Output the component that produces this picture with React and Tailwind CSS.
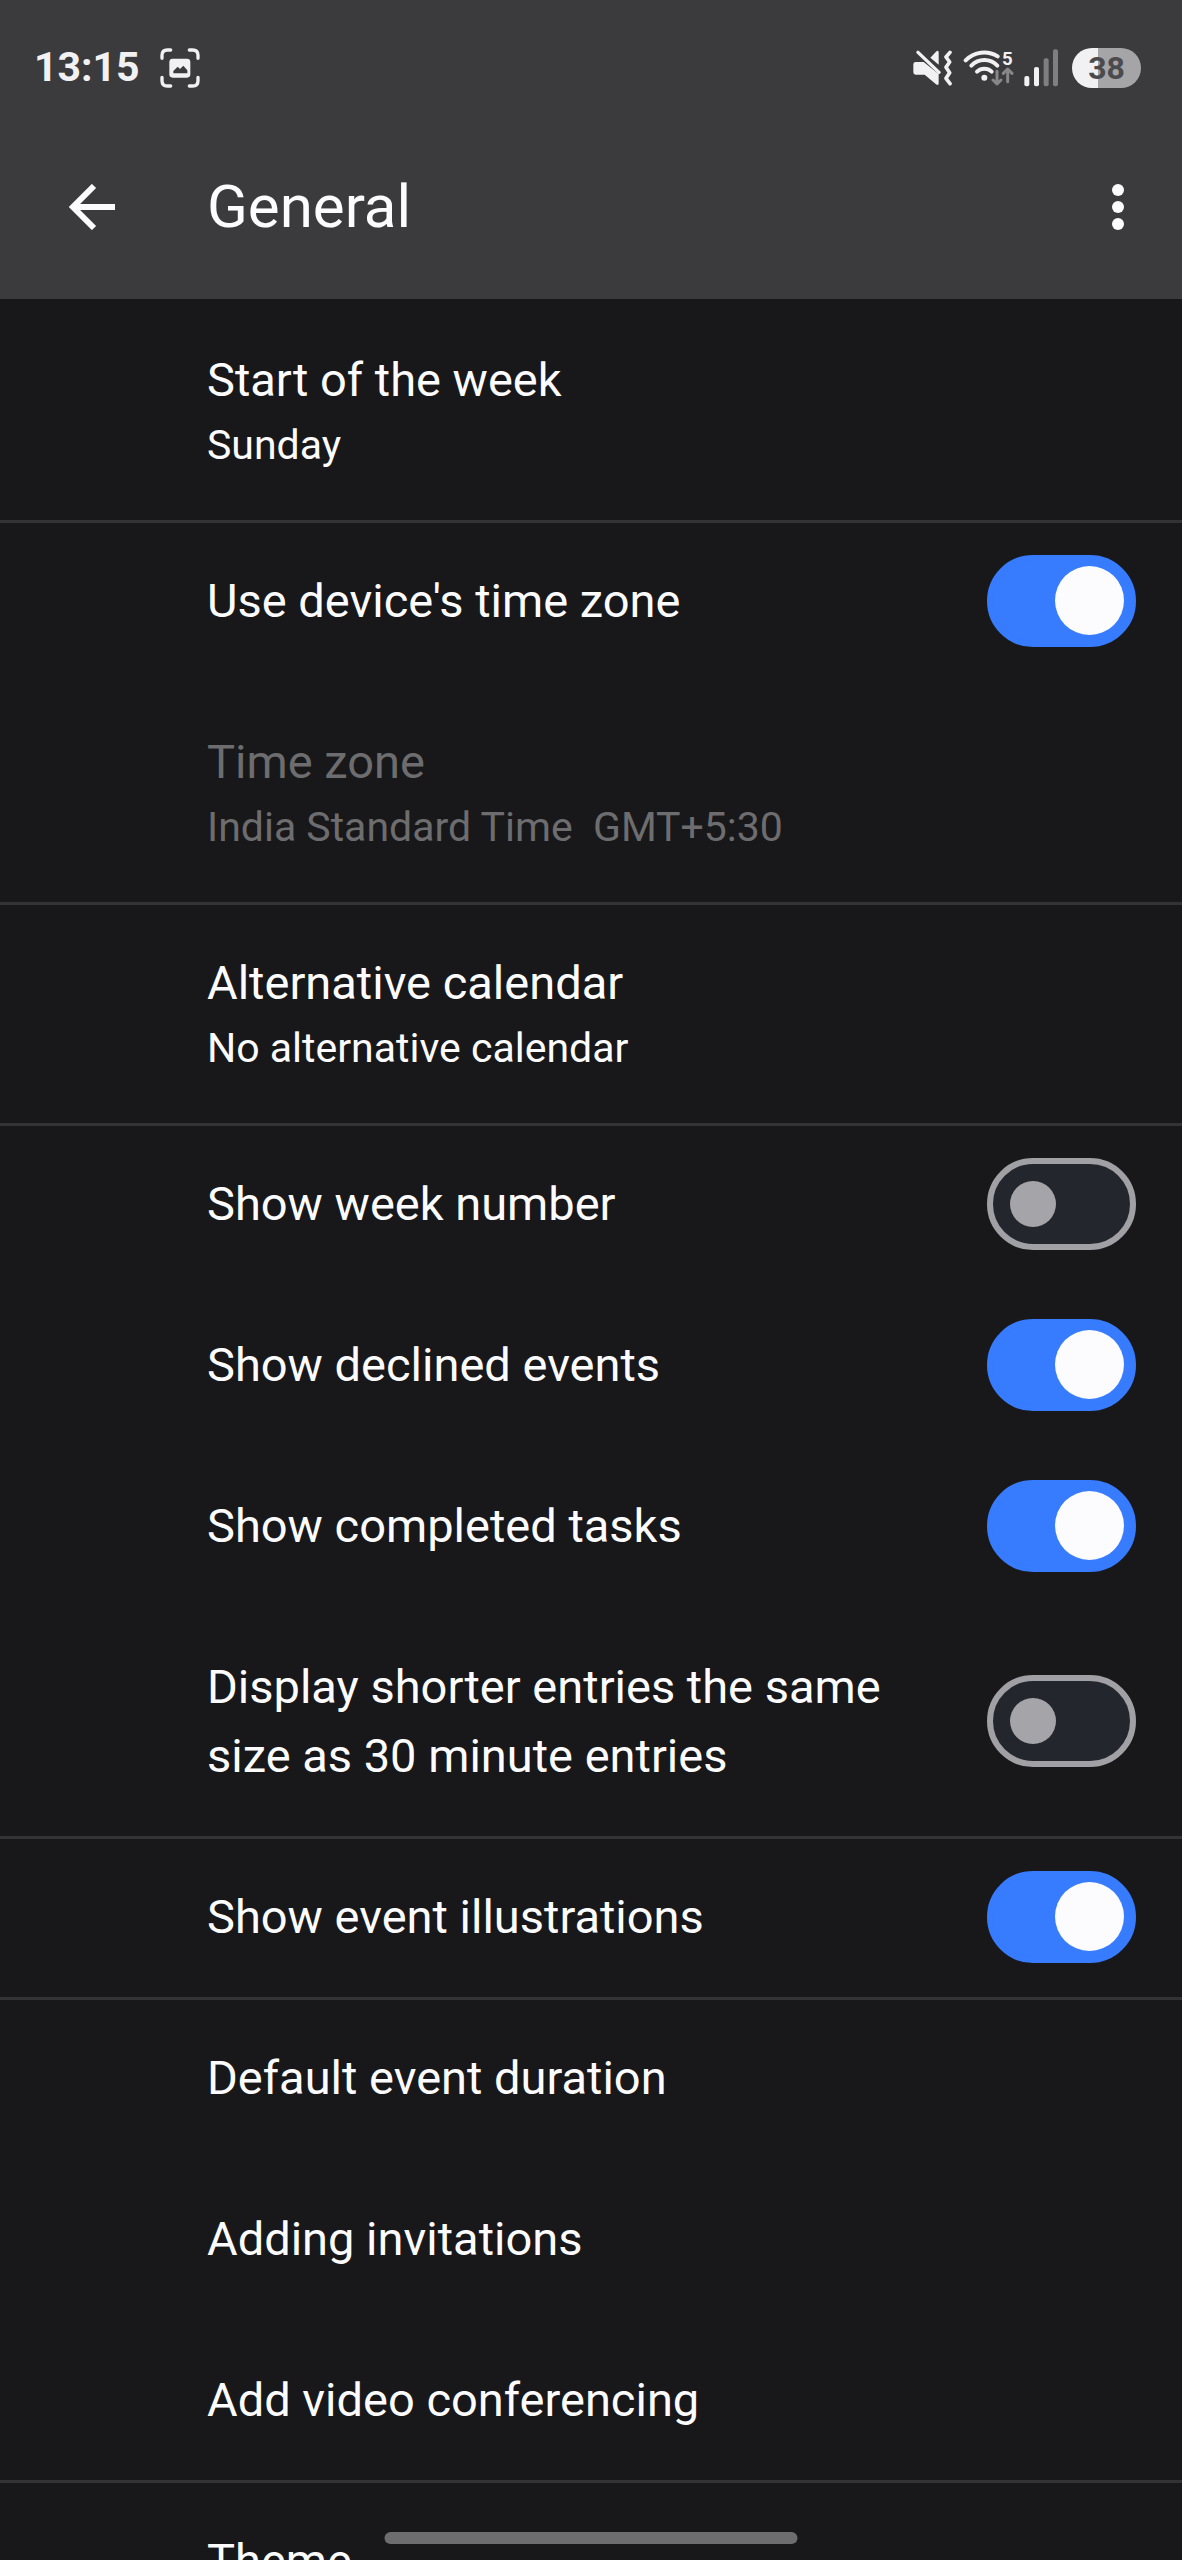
import { useState } from "react";

function ScreenshotIcon() {
  return (
    <svg viewBox="0 0 120 120" className="size-10" fill="none" aria-hidden="true">
      <g stroke="#f1f1f3" strokeWidth="10" strokeLinecap="round">
        <path d="M6 31V22Q6 6 22 6H32" />
        <path d="M88 6H98Q114 6 114 22V31" />
        <path d="M114 88V98Q114 114 98 114H88" />
        <path d="M32 114H22Q6 114 6 98V88" />
      </g>
      <rect x="28" y="32" width="63" height="57" rx="10" fill="#f1f1f3" />
      <path d="M40 76V69L53 56L60 63L70 53L82 67V76Z" fill="#3b3b3d" />
    </svg>
  );
}

function VibrateIcon() {
  return (
    <svg viewBox="0 0 120 108" className="h-9 w-10" fill="none" aria-hidden="true">
      <path
        d="M8 36H32L77 72V99Q77 109 69 103L35 74H8Q1 74 1 67V43Q1 36 8 36Z"
        fill="#f1f1f3"
      />
      <path d="M15 7L78 67" stroke="#f1f1f3" strokeWidth="10" strokeLinecap="round" />
      <path d="M52 23L69 5Q77 -1 77 8V44Z" fill="#f1f1f3" />
      <path
        d="M111 7L99 21L110 36L99 52L110 68L99 85L111 101"
        stroke="#f1f1f3"
        strokeWidth="11"
        strokeLinecap="round"
        strokeLinejoin="round"
      />
    </svg>
  );
}

function WifiIcon() {
  return (
    <svg viewBox="0 0 153 111" className="h-[37px] w-[51px]" fill="none" aria-hidden="true">
      <g stroke="#f1f1f3" strokeWidth="12" strokeLinecap="round">
        <path d="M8 34A77 77 0 0 1 104 22" />
        <path d="M25 50A54 54 0 0 1 103 50" />
        <path d="M42 68A32 32 0 0 1 86 68" />
      </g>
      <circle cx="64" cy="86" r="9" fill="#f1f1f3" />
      <text
        x="117"
        y="47"
        fontSize="56"
        fontWeight="700"
        fill="#f1f1f3"
        className="font-['Roboto',sans-serif]"
      >
        5
      </text>
      <g stroke="#87878a" strokeWidth="9" strokeLinecap="round" strokeLinejoin="round">
        <path d="M102 67V104M90 93L102 105L114 93" />
        <path d="M134 98V60M121 73L134 60L147 73" />
      </g>
    </svg>
  );
}

function SignalIcon() {
  return (
    <svg viewBox="0 0 102 114" className="mr-1 h-[38px] w-[34px]" aria-hidden="true">
      <rect x="1" y="81" width="15" height="31" rx="6" fill="#f1f1f3" />
      <rect x="30" y="54" width="15" height="58" rx="6" fill="#f1f1f3" />
      <rect x="59" y="28" width="15" height="84" rx="6" fill="#7f7f81" />
      <rect x="87" y="1" width="15" height="111" rx="6" fill="#7f7f81" />
    </svg>
  );
}

function Battery({ level }) {
  return (
    <div className="flex h-10 w-[69px] items-center justify-center rounded-full bg-[linear-gradient(to_right,#f1f1f3_38%,#a5a5a7_38%)] text-[32px] font-bold leading-10 text-[#4b4b4d]">
      {level}
    </div>
  );
}

function StatusBar() {
  return (
    <div className="flex h-[115px] items-center justify-between pl-[34px] pr-[41px] pt-5">
      <div className="flex items-center gap-5">
        <span className="text-[41px] font-bold leading-none text-[#f1f1f3]">13:15</span>
        <ScreenshotIcon />
      </div>
      <div className="flex items-center gap-[10px]">
        <VibrateIcon />
        <WifiIcon />
        <SignalIcon />
        <Battery level={38} />
      </div>
    </div>
  );
}

function Toolbar() {
  return (
    <div className="flex h-[184px] items-center pl-[69px] pr-[41px]">
      <button type="button" aria-label="Back" className="mr-[92px] shrink-0">
        <svg viewBox="0 0 46 46" className="size-[46px]" fill="none" stroke="#fcfcff" strokeWidth="6">
          <path d="M46 23H5M25 2L4 23L25 44" />
        </svg>
      </button>
      <h1 className="flex-1 text-[60px] leading-none">General</h1>
      <button type="button" aria-label="More options" className="shrink-0">
        <svg viewBox="0 0 46 46" className="size-[46px]" fill="#fcfcff">
          <circle cx="23" cy="6" r="6" />
          <circle cx="23" cy="23" r="6" />
          <circle cx="23" cy="40" r="6" />
        </svg>
      </button>
    </div>
  );
}

function Divider() {
  return <hr className="-mb-[3px] h-[3px] border-0 bg-[#333335]" />;
}

function LinkRow({ title, subtitle, disabled }) {
  return (
    <button
      type="button"
      disabled={disabled}
      className="block w-full py-[46px] pl-[207px] pr-[46px] text-left disabled:text-[#6d6d6f]"
    >
      <span className="block text-[47px] leading-[69px]">{title}</span>
      {subtitle && (
        <span className="-mb-[2px] block whitespace-pre text-[41px] leading-[62px]">
          {subtitle}
        </span>
      )}
    </button>
  );
}

function SwitchRow({ title, defaultChecked = false }) {
  const [checked, setChecked] = useState(defaultChecked);

  return (
    <label className="flex items-center py-[46px] pl-[207px] pr-[46px]">
      <span className="flex-1 pr-[92px] text-[47px] leading-[69px]">{title}</span>
      <input
        type="checkbox"
        role="switch"
        checked={checked}
        onChange={(e) => setChecked(e.target.checked)}
        className="-my-3 flex h-[92px] w-[149px] shrink-0 appearance-none items-center rounded-full border-[6px] border-[#a1a0a5] bg-[#24262e] px-[17px] before:size-[46px] before:rounded-full before:bg-[#a5a4a9] checked:justify-end checked:border-[#377bff] checked:bg-[#377bff] checked:px-[6px] checked:before:size-[69px] checked:before:bg-[#fcfcff]"
      />
    </label>
  );
}

export default function App() {
  return (
    <div className="relative flex h-screen flex-col overflow-hidden bg-[#18181a] font-['Roboto',sans-serif] text-[#fcfcff]">
      <header className="shrink-0 bg-[#3b3b3d]">
        <StatusBar />
        <Toolbar />
      </header>

      <main className="min-h-0 flex-1 overflow-hidden">
        <LinkRow title="Start of the week" subtitle="Sunday" />
        <Divider />
        <SwitchRow title="Use device's time zone" defaultChecked />
        <LinkRow title="Time zone" subtitle="India Standard Time  GMT+5:30" disabled />
        <Divider />
        <LinkRow title="Alternative calendar" subtitle="No alternative calendar" />
        <Divider />
        <SwitchRow title="Show week number" />
        <SwitchRow title="Show declined events" defaultChecked />
        <SwitchRow title="Show completed tasks" defaultChecked />
        <SwitchRow title="Display shorter entries the same size as 30 minute entries" />
        <Divider />
        <SwitchRow title="Show event illustrations" defaultChecked />
        <Divider />
        <LinkRow title="Default event duration" />
        <LinkRow title="Adding invitations" />
        <LinkRow title="Add video conferencing" />
        <Divider />
        <LinkRow title="Theme" />
      </main>

      {/* Gesture bar */}
      <div className="absolute bottom-4 left-1/2 h-3 w-[413px] -translate-x-1/2 rounded-md bg-[#6d6d6f]" />
    </div>
  );
}
